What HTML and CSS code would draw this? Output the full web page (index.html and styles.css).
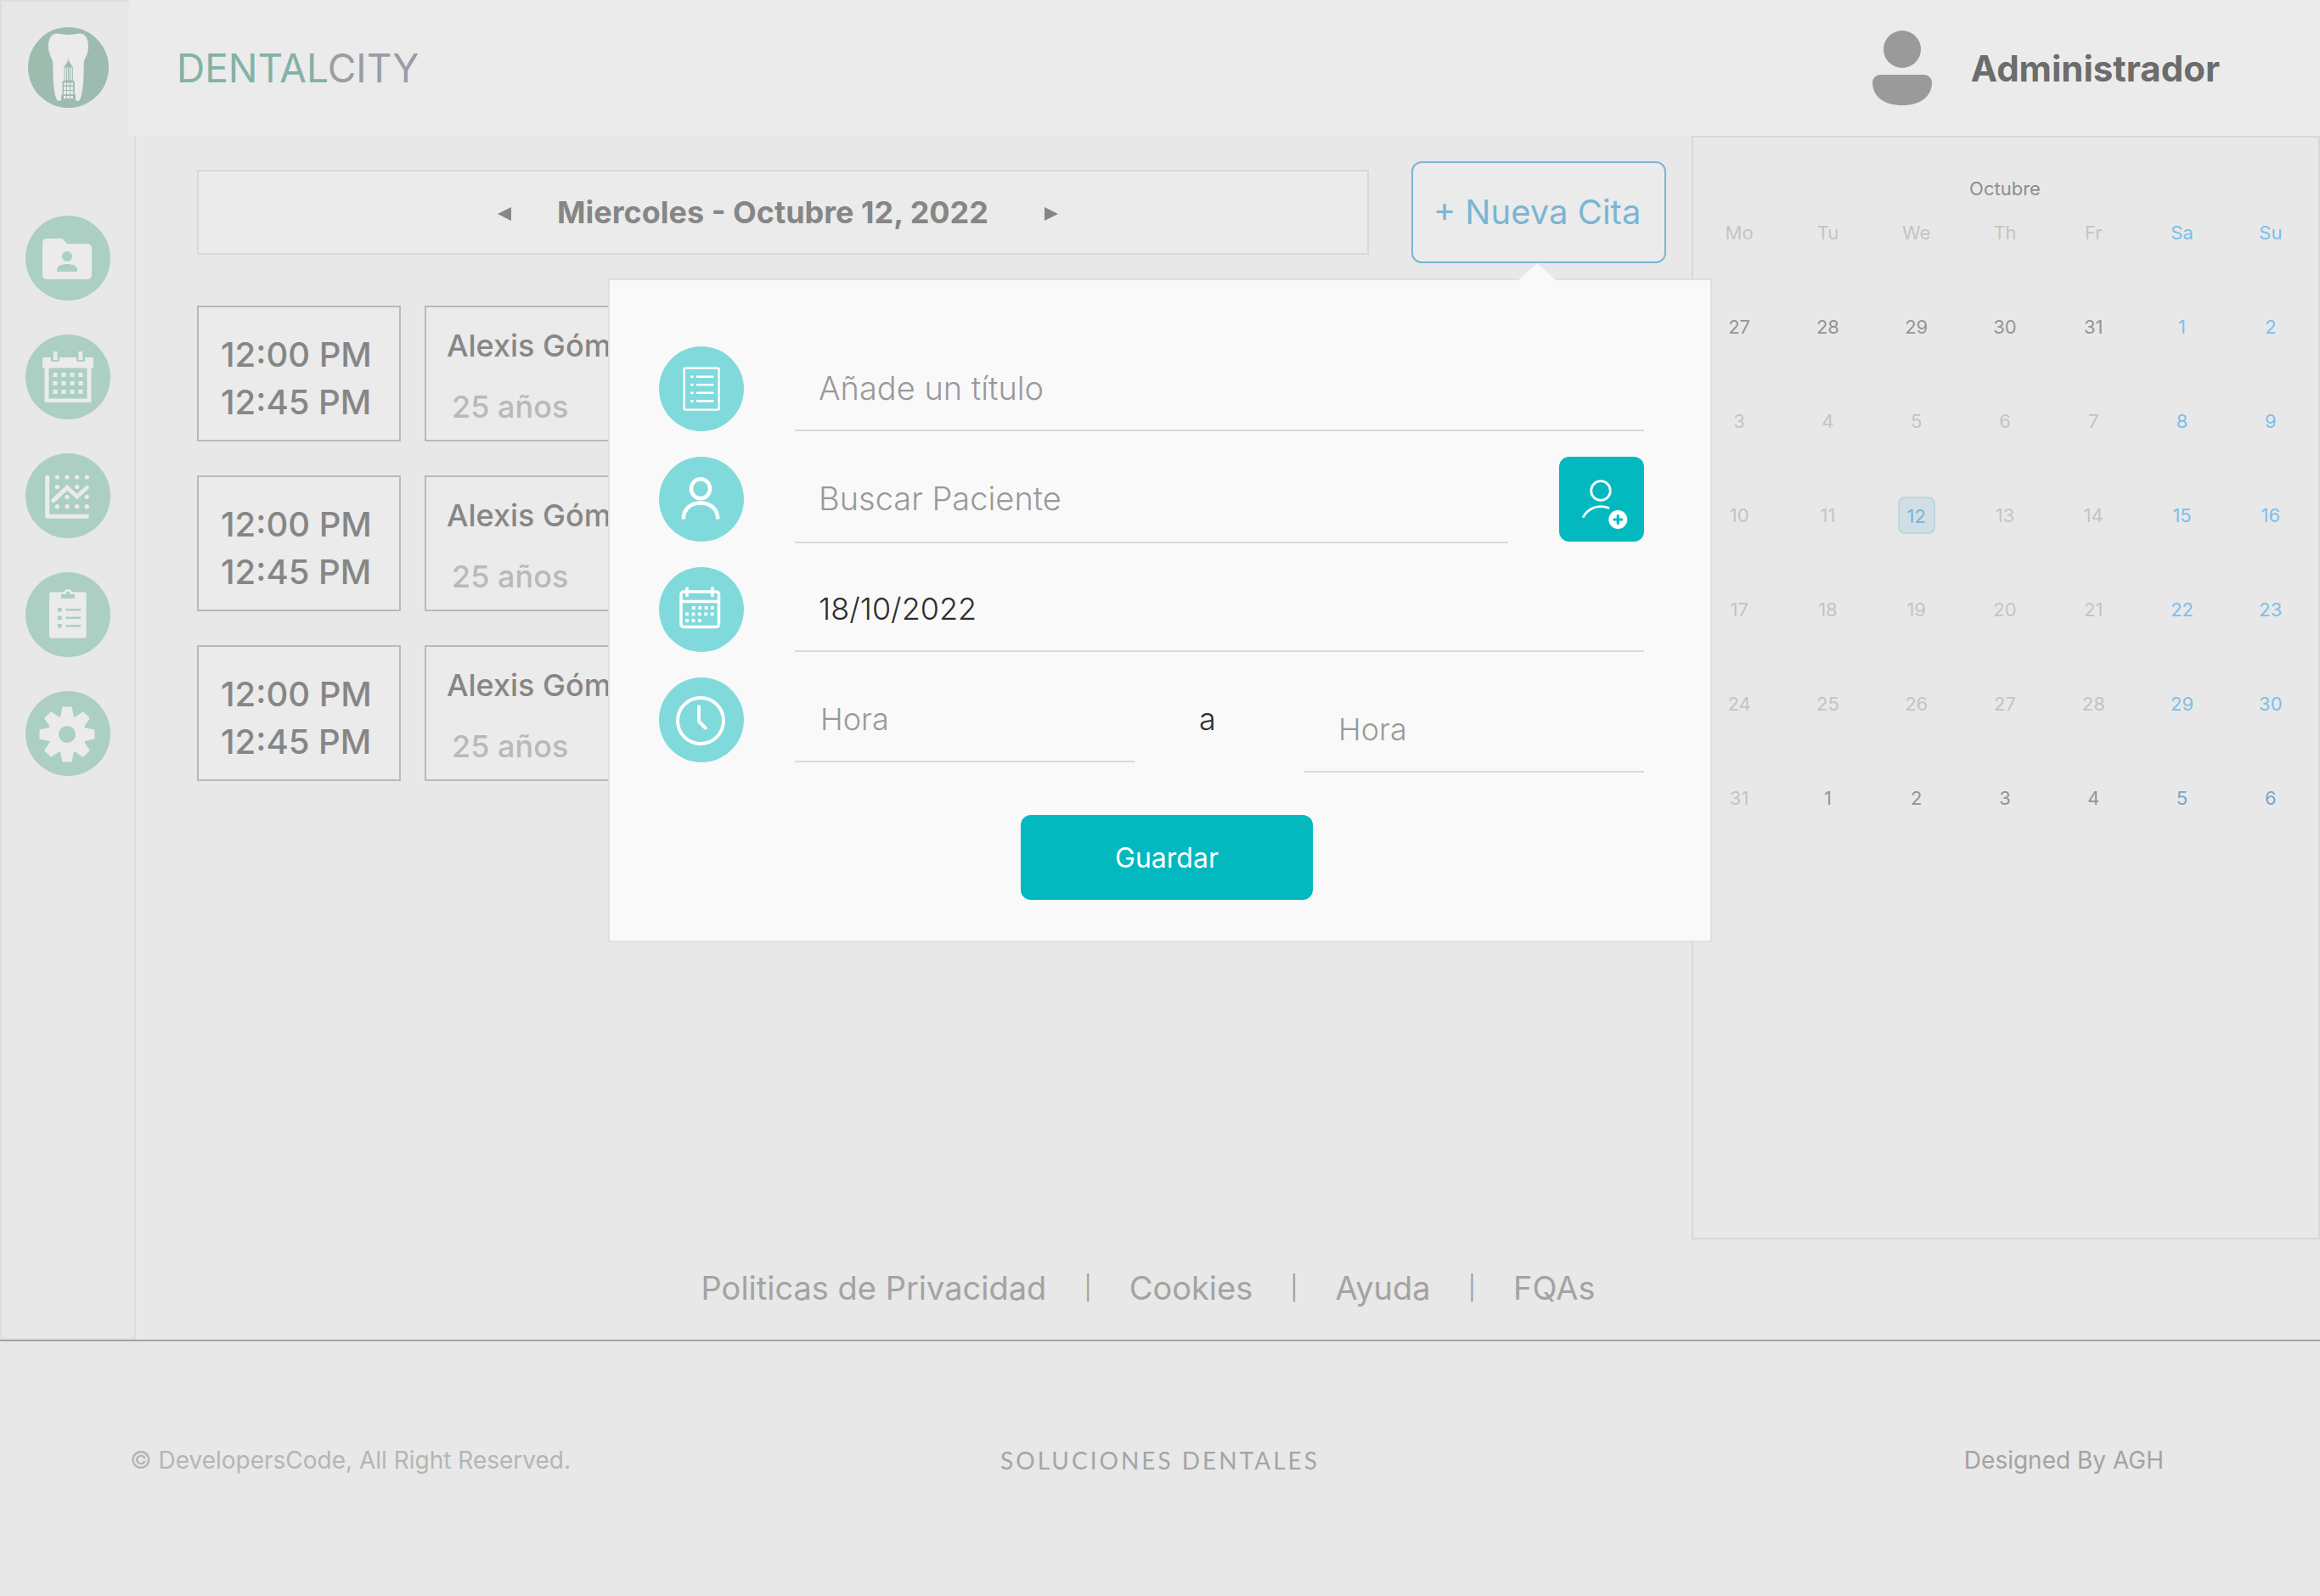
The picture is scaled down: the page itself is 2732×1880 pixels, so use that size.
FILE: index.html
```html
<!DOCTYPE html>
<html lang="es">
<head>
<meta charset="utf-8">
<title>DentalCity - Citas</title>
<meta name="viewport" content="width=device-width, initial-scale=1">
<link rel="stylesheet" href="styles.css">
</head>
<body>
<div class="app">
  <aside class="sidebar">
    <a class="logo" href="#" aria-label="DentalCity">
      <svg viewBox="33 32 95 95">
        <circle cx="80.5" cy="79.5" r="47.5" fill="#9ebbaf"/>
        <path d="M80.500 41C86 41 90 39.300 95 39.500C101 40 104.500 47 104 56C103.500 64 100 68 98.800 73C98.500 90 98.500 105 95 115C94 118 93 119.500 91 119C89 118.500 88.500 117 88.500 112H72.500C72.500 117 72 118.500 70 119C68 119.500 67 118 66 115C62.500 105 62.500 90 62.200 73C61 68 57.500 64 57 56C56.500 47 60 40 66 39.500C71 39.300 75 41 80.500 41Z" fill="#ebebeb"/>
        <path d="M80.200 68h.6v3.500l5 7.500v16.500h2V111.500h1V118H72.500V111.500h1V95.500h2V79l4.700-7.500z" fill="#9ebbaf"/>
        <path d="M76.500 79.500h1.500v15h-1.500zM79 79.500h1v15h-1zM81.300 79.500h1v15h-1zM83.300 79.500h1.500v15h-1.500zM75 97.500h3v3h-3zM79 97.500h3v3h-3zM83 97.500h3v3h-3zM75 102h3v4h-3zM79 102h3v4h-3zM83 102h3v4h-3zM75 107h3v4h-3zM79 107h3v4h-3zM83 107h3v4h-3zM75 113h3v3h-3zM79 113h3v3h-3zM83 113h3v3h-3z" fill="#ebebeb"/>
      </svg>
    </a>
    <nav class="side-nav" aria-label="Principal">
      <a href="#" aria-label="Pacientes"><svg viewBox="0 0 100 100">
        <path d="M25 27h18.500l5.500 6.300h24a5 5 0 0 1 5 5v31.700a5 5 0 0 1-5 5H25a5 5 0 0 1-5-5V32a5 5 0 0 1 5-5z" fill="#ebebeb"/>
        <circle cx="49" cy="48" r="6" fill="#abcfc3"/><path d="M37 66v-3c0-4 7-6 12-6s12 2 12 6v3z" fill="#abcfc3"/>
      </svg></a>
      <a href="#" aria-label="Calendario"><svg viewBox="0 0 100 100">
        <path fill="#ebebeb" d="M22 27h8v5h10v-5h20v5h10v-5h8a2 2 0 0 1 2 2v8.500a2 2 0 0 1-2 2h-.500v40.500h-55V39.500H22a2 2 0 0 1-2-2V29a2 2 0 0 1 2-2zM27.500 39.500V75.500h45V39.500z"/>
        <path fill="#ebebeb" d="M32.800 20h4.700v10h-4.700zM62.600 20h4.700v10h-4.700zM32.500 45h5v5h-5zM42.500 45h5v5h-5zM52.500 45h5v5h-5zM62.500 45h5v5h-5zM32.500 55h5v5h-5zM42.500 55h5v5h-5zM52.500 55h5v5h-5zM62.500 55h5v5h-5zM32.500 65h5v5h-5zM42.500 65h5v5h-5zM52.500 65h5v5h-5zM62.500 65h5v5h-5z"/>
      </svg></a>
      <a href="#" aria-label="Reportes"><svg viewBox="0 0 100 100">
        <g fill="none" stroke="#ebebeb" stroke-width="5" stroke-linecap="round" stroke-linejoin="round"><path d="M25.700 28V74.300H72.300"/><path d="M32.700 55.700L49 40.500L60.700 51L72.300 40.500" stroke-linejoin="miter"/></g>
        <path d="M37.300 28h.01M49 28h.01M60.700 28h.01M72.300 28h.01M37.300 39.500h.01M60.700 39.500h.01M49 51.300h.01M72.300 51.300h.01M37.300 62.700h.01M49 62.700h.01M60.700 62.700h.01M72.300 62.700h.01" stroke="#ebebeb" stroke-width="5.200" stroke-linecap="round"/>
      </svg></a>
      <a href="#" aria-label="Historial"><svg viewBox="0 0 100 100">
        <circle cx="50" cy="25" r="5" fill="#ebebeb"/><rect x="28" y="23.400" width="43.700" height="54.400" rx="3" fill="#ebebeb"/>
        <path d="M42 26h6a2 3 0 0 1 4 0h6v5H42zM38 42h4.700v4.500H38zM38 51.500h4.700V56H38zM38 61h4.700v4.500H38z" fill="#abcfc3"/><circle cx="50" cy="24.500" r="2" fill="#abcfc3"/>
        <path d="M48.500 44.200h15.500M48.500 53.700h15.500M48.500 63.200h15.500" stroke="#abcfc3" stroke-width="2.600" stroke-linecap="round"/>
      </svg></a>
      <a href="#" aria-label="Ajustes"><svg viewBox="-49 -51 100 100">
        <defs><path id="tooth" d="M-8-20L-5.800-31.500a1.200 1.200 0 0 1 1.200-1H4.600a1.200 1.200 0 0 1 1.200 1L8-20z"/></defs>
        <g fill="#ebebeb"><circle r="22.500"/><use href="#tooth"/><use href="#tooth" transform="rotate(45)"/><use href="#tooth" transform="rotate(90)"/><use href="#tooth" transform="rotate(135)"/><use href="#tooth" transform="rotate(180)"/><use href="#tooth" transform="rotate(225)"/><use href="#tooth" transform="rotate(270)"/><use href="#tooth" transform="rotate(315)"/></g>
        <circle r="10" fill="#abcfc3"/>
      </svg></a>
    </nav>
  </aside>

  <header class="topbar">
    <span class="brand"><span class="brand-dental">DENTAL</span>CITY</span>
    <div class="user">
      <svg class="avatar" viewBox="0 0 70 88"><circle cx="35" cy="22" r="22"/><path d="M9 52h52a9 9 0 0 1 9 9c0 17-14 27-35 27S0 78 0 61a9 9 0 0 1 9-9z"/></svg>
      <span class="user-name">Administrador</span>
    </div>
  </header>

  <div class="workspace">
    <main class="agenda">
      <div class="toolbar">
        <div class="date-bar">
          <button type="button" aria-label="Anterior"><svg viewBox="0 0 16 16"><path d="M0 8L16 0V16z"/></svg></button>
          <h1>Miercoles - Octubre 12, 2022</h1>
          <button type="button" aria-label="Siguiente"><svg viewBox="0 0 16 16"><path d="M16 8L0 0V16z"/></svg></button>
        </div>
        <div class="new-wrap">
          <button type="button" class="new-btn">+ Nueva Cita</button>
          <form class="popover" onsubmit="return false">
            <div class="row">
              <label class="dot" for="titulo" aria-label="Título"><svg viewBox="0 0 100 100"><rect x="29.600" y="25.600" width="41" height="49" rx="1" fill="none" stroke="#fff" stroke-width="2.400"/><path d="M37 35.700h3.500M44 35.700h20.500M37 45.200h3.500M44 45.200h20.500M37 54.800h3.500M44 54.800h20.500M37 64.400h3.500M44 64.400h20.500" stroke="#fff" stroke-width="2.600"/></svg></label>
              <input id="titulo" class="wide" type="text" placeholder="Añade un título">
            </div>
            <div class="row row-patient">
              <label class="dot" for="paciente" aria-label="Paciente"><svg viewBox="0 0 100 100"><g fill="none" stroke="#fff" stroke-width="4.500"><ellipse cx="49" cy="37.700" rx="11" ry="11.500"/><path d="M28.800 73.500C28.800 61 38 54.500 49 54.500S69.200 61 69.200 73.500"/></g></svg></label>
              <input id="paciente" class="wide" type="text" placeholder="Buscar Paciente">
              <button type="button" class="add-btn" aria-label="Nuevo paciente"><svg viewBox="0 0 100 100"><g fill="none" stroke="#fff" stroke-width="2.800" stroke-linecap="round"><circle cx="49" cy="40" r="11.300"/><path d="M28.600 70.600C34 61 45 56 58 60.200"/></g><circle cx="69.300" cy="74" r="11" fill="#fff"/><path d="M64.800 74h9M69.300 69.500v9" stroke="#02b9c0" stroke-width="3.200" stroke-linecap="round"/></svg></button>
            </div>
            <div class="row">
              <label class="dot" for="fecha" aria-label="Fecha"><svg viewBox="0 0 100 100"><rect x="26" y="29" width="44.500" height="41.500" rx="3" fill="none" stroke="#fff" stroke-width="3.500"/><path d="M26 40.500h44.500M33 23.500v11.500M63 23.500v11.500" stroke="#fff" stroke-width="3.500"/><path d="M38.900 48h25.800M31.100 55.400h33.600M31.100 63h18.600" stroke="#fff" stroke-width="3.800" stroke-dasharray="3.800 3.600"/></svg></label>
              <input id="fecha" type="text" value="18/10/2022">
            </div>
            <div class="row row-time">
              <label class="dot" for="desde" aria-label="Hora"><svg viewBox="0 0 100 100"><g fill="none" stroke="#fff" stroke-width="4" stroke-linecap="round" stroke-linejoin="round"><circle cx="49" cy="51" r="27"/><path d="M47 34.500V52L54.700 59.500"/></g></svg></label>
              <input id="desde" type="text" placeholder="Hora">
              <label class="to" for="hasta">a</label>
              <input id="hasta" class="until" type="text" placeholder="Hora">
            </div>
            <button type="submit" class="save">Guardar</button>
          </form>
        </div>
      </div>
      <ul class="visits">
        <li><div class="slot"><span>12:00 PM</span><span>12:45 PM</span></div><div class="patient"><span>Alexis Gómez</span><span class="age">25 años</span></div></li>
        <li><div class="slot"><span>12:00 PM</span><span>12:45 PM</span></div><div class="patient"><span>Alexis Gómez</span><span class="age">25 años</span></div></li>
        <li><div class="slot"><span>12:00 PM</span><span>12:45 PM</span></div><div class="patient"><span>Alexis Gómez</span><span class="age">25 años</span></div></li>
      </ul>
    </main>

    <section class="calendar">
      <table>
        <caption>Octubre</caption>
        <thead><tr><th>Mo</th><th>Tu</th><th>We</th><th>Th</th><th>Fr</th><th>Sa</th><th>Su</th></tr></thead>
        <tbody>
          <tr class="prev"><td>27</td><td>28</td><td>29</td><td>30</td><td>31</td><td>1</td><td>2</td></tr>
          <tr><td>3</td><td>4</td><td>5</td><td>6</td><td>7</td><td>8</td><td>9</td></tr>
          <tr><td>10</td><td>11</td><td><span class="today">12</span></td><td>13</td><td>14</td><td>15</td><td>16</td></tr>
          <tr><td>17</td><td>18</td><td>19</td><td>20</td><td>21</td><td>22</td><td>23</td></tr>
          <tr><td>24</td><td>25</td><td>26</td><td>27</td><td>28</td><td>29</td><td>30</td></tr>
          <tr class="next"><td class="current">31</td><td>1</td><td>2</td><td>3</td><td>4</td><td>5</td><td>6</td></tr>
        </tbody>
      </table>
    </section>
  </div>

  <nav class="links" aria-label="Enlaces">
    <a href="#">Politicas de Privacidad</a><span>|</span><a href="#">Cookies</a><span>|</span><a href="#">Ayuda</a><span>|</span><a href="#">FQAs</a>
  </nav>
</div>

<footer class="footer">
  <span class="copy">© DevelopersCode, All Right Reserved.</span>
  <span class="tagline">SOLUCIONES DENTALES</span>
  <span class="credit">Designed By AGH</span>
</footer>
</body>
</html>
```
FILE: styles.css
```css
* {
  box-sizing: border-box;
}

body {
  margin: 0;
  background: #e8e8e8;
  color: #868686;
  font-family: Inter, "Liberation Sans", sans-serif;
}

button,
input {
  font: inherit;
  margin: 0;
}

button {
  padding: 0;
  cursor: pointer;
}

a {
  color: inherit;
  text-decoration: none;
}

svg {
  display: block;
}

/* Page frame */
.app {
  display: grid;
  grid-template-columns: 160px minmax(0, 1fr);
  grid-template-rows: 160px auto auto;
  border-bottom: 2px solid #a3a3a3;
}

.sidebar {
  grid-row: 1 / 4;
  padding-top: 30px;
  border: 2px solid #dedede;
  display: flex;
  flex-direction: column;
  align-items: center;
  gap: 127px;
}

.logo {
  width: 95px;
}

.side-nav {
  display: flex;
  flex-direction: column;
  gap: 40px;
}

.side-nav a {
  width: 100px;
  height: 100px;
  border-radius: 50%;
  background: #abcfc3;
}

.topbar {
  margin-left: -8px;
  padding: 0 118px 0 56px;
  background: #ebebeb;
  display: flex;
  align-items: center;
  justify-content: space-between;
}

.brand {
  font-size: 46px;
  line-height: 56px;
  color: #9a9da3;
}

.brand-dental {
  color: #84b1a5;
}

.user {
  display: flex;
  align-items: center;
  gap: 46px;
}

.avatar {
  width: 70px;
  height: 88px;
  fill: #9a9a9a;
}

.user-name {
  font-size: 42px;
  font-weight: 700;
  color: #6c6c6c;
}

.workspace {
  display: flex;
  min-height: 1300px;
}

/* Agenda */
.agenda {
  flex: 1;
  min-width: 0;
  padding: 30px 30px 0 72px;
}

.toolbar {
  display: flex;
  align-items: center;
  gap: 50px;
}

.date-bar {
  flex: 1;
  height: 100px;
  padding-right: 12px;
  border: 2px solid #d8d8d8;
  background: #ebebeb;
  display: flex;
  align-items: center;
  justify-content: center;
  gap: 54px;
}

.date-bar h1 {
  margin: 0 12px 0 0;
  font-size: 36px;
  font-weight: 700;
}

.date-bar button {
  width: 16px;
  height: 16px;
  margin-top: 4px;
  border: 0;
  background: none;
  fill: #868686;
}

.new-wrap {
  position: relative;
}

.new-btn {
  width: 300px;
  height: 120px;
  padding: 0 4px 2px 0;
  border: 2px solid #7ab6d4;
  border-radius: 12px;
  background: #ebebeb;
  color: #7ab6d4;
  font-size: 40px;
}

.visits {
  list-style: none;
  margin: 50px 0 0;
  padding: 0;
  display: grid;
  gap: 40px;
}

.visits li {
  display: flex;
  gap: 28px;
}

.slot,
.patient {
  height: 160px;
  border: 2px solid #b9b9b9;
  background: #ebebeb;
  display: flex;
  flex-direction: column;
  font-weight: 500;
}

.slot {
  width: 240px;
  padding: 28px 0 0 26px;
  font-size: 40px;
  line-height: 56px;
}

.patient {
  flex: 1;
  padding: 9px 24px 0;
  font-size: 36px;
  line-height: 72px;
}

.age {
  padding-left: 6px;
  color: #b9b9b9;
}

/* New appointment popover */
.popover {
  position: absolute;
  z-index: 2;
  top: 138px;
  right: -54px;
  width: 1300px;
  padding: 78px 78px 48px 58px;
  border: 2px solid #dfdfdf;
  background: #f9f9f9;
  display: flex;
  flex-direction: column;
  gap: 30px;
  font-size: 36px;
  font-weight: 300;
}

.popover::before {
  content: "";
  position: absolute;
  top: -20px;
  right: 182px;
  border: 22px solid transparent;
  border-top: 0;
  border-bottom: 20px solid #f9f9f9;
}

.row {
  display: flex;
  align-items: flex-start;
  gap: 60px;
  height: 100px;
}

.dot {
  flex: none;
  width: 100px;
  height: 100px;
  border-radius: 50%;
  background: #80dadc;
}

.row input {
  flex: 1 1 200px;
  min-width: 0;
  height: 100px;
  padding: 0 28px;
  border: 0;
  border-bottom: 2px solid #d8d8d8;
  border-radius: 0;
  background: none;
  color: #2e2e2e;
}

.row input::placeholder {
  color: #999;
  opacity: 1;
}

.row .wide {
  font-size: 38px;
}

.row-patient .wide {
  height: 102px;
  padding-bottom: 2px;
}

.add-btn {
  width: 100px;
  height: 100px;
  border: 0;
  border-radius: 12px;
  background: #02b9c0;
}

.row-time .to {
  flex: none;
  width: 80px;
  padding-left: 16px;
  line-height: 98px;
  color: #2e2e2e;
}

.row-time input {
  padding: 0 30px;
}

.row-time .until {
  margin-top: 12px;
  padding: 0 40px;
}

.save {
  width: 344px;
  height: 100px;
  margin: 32px 0 0 426px;
  border: 0;
  border-radius: 12px;
  background: #02b9c0;
  color: #fff;
  font-size: 32px;
  font-weight: 400;
}

/* Month calendar */
.calendar {
  width: 740px;
  padding: 38px 4px 0 2px;
  border: 2px solid #d8d8d8;
}

.calendar table {
  width: 100%;
  table-layout: fixed;
  border-collapse: collapse;
  font-size: 22px;
  text-align: center;
  color: #c4c4c4;
}

.calendar caption {
  height: 44px;
  line-height: 44px;
  color: #8e8e8e;
}

.calendar th {
  height: 60px;
  padding: 0;
  font-weight: 400;
}

.calendar tbody::before {
  content: "";
  display: block;
  height: 25px;
}

.calendar td {
  height: 111px;
  padding: 0;
}

.calendar th:nth-child(n+6),
.calendar td:nth-child(n+6) {
  color: #7cbfea;
}

.calendar .prev td:nth-child(-n+5),
.calendar .next td:nth-child(-n+5) {
  color: #959595;
}

.calendar .next td.current {
  color: #c4c4c4;
}

.calendar .next td:nth-child(n+6) {
  color: #78a6c9;
}

.today {
  display: block;
  width: 44px;
  height: 44px;
  margin: 0 auto;
  border: 2px solid #bdd6e1;
  border-radius: 8px;
  background: #d2dee5;
  color: #7ab3d3;
  line-height: 42px;
}

/* Footer */
.links {
  min-height: 118px;
  padding: 0 188px 4px 0;
  display: flex;
  align-items: center;
  justify-content: center;
  gap: 44px;
  font-size: 38px;
  color: #a3a3a3;
}

.links span {
  font-size: 28px;
}

.footer {
  min-height: 280px;
  padding: 0 153px;
  display: grid;
  grid-template-columns: 1fr auto 1fr;
  align-items: center;
  font-size: 28px;
}

.copy {
  color: #b5b5b5;
}

.tagline {
  font-family: Lato, sans-serif;
  letter-spacing: 3px;
  color: #a3a5a8;
}

.credit {
  padding-right: 31px;
  text-align: right;
  color: #a3a3a3;
}
```
